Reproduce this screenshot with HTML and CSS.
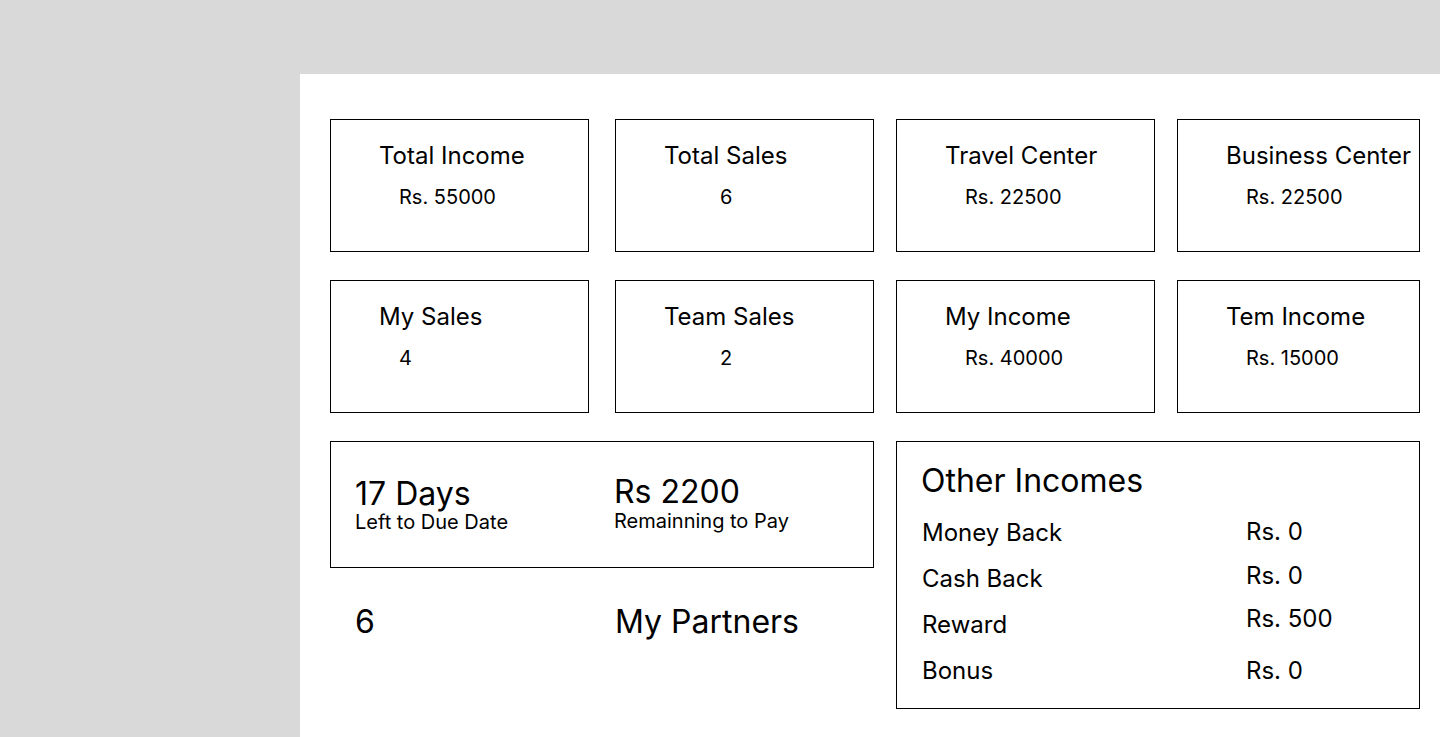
FILE: index.html
```html
<!DOCTYPE html>
<html lang="en">
<head>
<meta charset="utf-8">
<title>Dashboard</title>
<link rel="stylesheet" href="styles.css">
</head>
<body>
<div class="page">
  <main class="panel">
    <div class="grid">
      <div class="card c1"><div class="card-title">Total Income</div><div class="card-value">Rs. 55000</div></div>
      <div class="card c2"><div class="card-title">Total Sales</div><div class="card-value count">6</div></div>
      <div class="card c3"><div class="card-title">Travel Center</div><div class="card-value">Rs. 22500</div></div>
      <div class="card c4"><div class="card-title">Business Center</div><div class="card-value">Rs. 22500</div></div>

      <div class="card c1"><div class="card-title">My Sales</div><div class="card-value">4</div></div>
      <div class="card c2"><div class="card-title">Team Sales</div><div class="card-value count">2</div></div>
      <div class="card c3"><div class="card-title">My Income</div><div class="card-value">Rs. 40000</div></div>
      <div class="card c4"><div class="card-title">Tem Income</div><div class="card-value">Rs. 15000</div></div>

      <div class="left-col">
        <div class="due-card">
          <div class="stat">
            <div class="stat-big">17 Days</div>
            <div class="stat-sub">Left to Due Date</div>
          </div>
          <div class="stat stat-raised">
            <div class="stat-big">Rs 2200</div>
            <div class="stat-sub">Remainning to Pay</div>
          </div>
        </div>
        <div class="partners">
          <div class="partners-count">6</div>
          <div class="partners-label">My Partners</div>
        </div>
      </div>

      <div class="other-card">
        <div class="other-title">Other Incomes</div>
        <div class="other-list">
          <div class="other-label">Money Back</div><div class="other-value up1">Rs. 0</div>
          <div class="other-label">Cash Back</div><div class="other-value up3">Rs. 0</div>
          <div class="other-label">Reward</div><div class="other-value up6">Rs. 500</div>
          <div class="other-label">Bonus</div><div class="other-value">Rs. 0</div>
        </div>
      </div>
    </div>
  </main>
</div>
</body>
</html>
```

FILE: styles.css
```css
* { box-sizing: border-box; }

html, body {
  margin: 0;
  padding: 0;
}

body {
  background: #d9d9d9;
  font-family: Inter, "Noto Sans", sans-serif;
  color: #000;
  overflow: hidden;
}

.page {
  padding: 74px 0 0 300px;
  height: 737px;
}

.panel {
  background: #fff;
  height: 663px;
  padding: 45px 0 0 30px;
}

.grid {
  display: grid;
  grid-template-columns: 259px 26px 259px 22px 259px 22px 243px;
  grid-template-rows: 133px 133px auto;
  row-gap: 28px;
}

.card {
  border: 1px solid #000;
  padding: 21px 0 0 48px;
}

.c1 { grid-column: 1; }
.c2 { grid-column: 3; }
.c3 { grid-column: 5; }
.c4 { grid-column: 7; }

.card-title {
  font-size: 24px;
  line-height: 30px;
  white-space: nowrap;
}

.card-value {
  margin-top: 14px;
  padding-left: 20px;
  font-size: 20px;
  line-height: 24px;
}

.card-value.count {
  padding-left: 56px;
}

.left-col {
  grid-column: 1 / 4;
  display: flex;
  flex-direction: column;
}

.due-card {
  height: 127px;
  border: 1px solid #000;
  padding: 34px 0 0 24px;
  display: flex;
}

.stat {
  width: 259px;
}

.stat-raised {
  margin-top: -2px;
}

.stat-big {
  font-size: 32px;
  line-height: 36px;
}

.stat-sub {
  font-size: 20px;
  line-height: 20px;
}

.stat-raised .stat-sub {
  margin-top: 1px;
}

.partners {
  display: flex;
  margin-top: 35px;
  padding-left: 25px;
  font-size: 32px;
  line-height: 38px;
}

.partners-count {
  width: 260px;
}

.other-card {
  grid-column: 5 / 8;
  height: 268px;
  border: 1px solid #000;
  padding: 20px 0 0 24px;
}

.other-title {
  font-size: 32px;
  line-height: 38px;
}

.other-list {
  margin-top: 10px;
  display: grid;
  grid-template-columns: 324px auto;
  grid-auto-rows: 46px;
  font-size: 24px;
  line-height: 46px;
}

.other-label {
  padding-left: 1px;
}

.other-value { padding-left: 1px; }
.up1 { margin-top: -1px; }
.up3 { margin-top: -3px; }
.up6 { margin-top: -6px; }
```
